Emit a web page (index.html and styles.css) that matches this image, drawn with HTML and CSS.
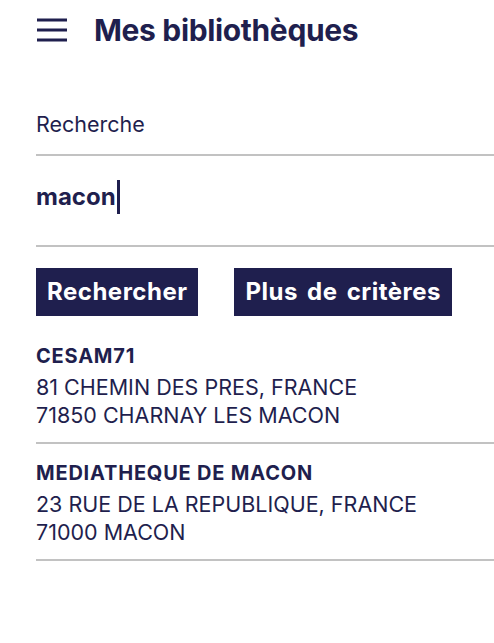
FILE: index.html
```html
<!DOCTYPE html>
<html lang="fr">
<head>
<meta charset="utf-8">
<link rel="stylesheet" href="styles.css">
</head>
<body>
<header class="topbar">
  <svg class="menu-icon" width="30" height="24" viewBox="0 0 30 24" aria-hidden="true">
    <rect x="0" y="0.5" width="30" height="3" fill="#1f1f4e"/>
    <rect x="0" y="10.5" width="30" height="3" fill="#1f1f4e"/>
    <rect x="0" y="20.5" width="30" height="3" fill="#1f1f4e"/>
  </svg>
  <h1 class="title">Mes bibliothèques</h1>
</header>
<main class="content">
  <div class="field">
    <div class="field-label">Recherche</div>
  </div>
  <div class="field">
    <div class="field-value">macon<span class="caret"></span></div>
  </div>
  <div class="actions">
    <button class="btn">Rechercher</button>
    <button class="btn">Plus de critères</button>
  </div>
  <ul class="results">
    <li class="result">
      <div class="result-name">CESAM71</div>
      <div class="result-line">81 CHEMIN DES PRES, FRANCE</div>
      <div class="result-line">71850 CHARNAY LES MACON</div>
    </li>
    <li class="result">
      <div class="result-name">MEDIATHEQUE DE MACON</div>
      <div class="result-line">23 RUE DE LA REPUBLIQUE, FRANCE</div>
      <div class="result-line">71000 MACON</div>
    </li>
  </ul>
</main>
</body>
</html>
```
FILE: styles.css
```css
* { box-sizing: border-box; }
html, body { margin: 0; padding: 0; background: #fff; }
body {
  font-family: Inter, Roboto, "Liberation Sans", sans-serif;
  color: #1f1f4e;
  width: 494px;
  height: 643px;
  overflow: hidden;
}
.topbar {
  display: flex;
  align-items: center;
  padding: 12px 0 0 37px;
}
.menu-icon { display: block; }
.title {
  margin: 0 0 0 27px;
  font-size: 30px;
  font-weight: 700;
  line-height: 36px;
  letter-spacing: -0.35px;
}
.content {
  padding-left: 36px;
  padding-top: 63px;
}
.field {
  border-bottom: 2px solid #c2c2c2;
}
.field-label {
  font-size: 21.5px;
  line-height: 26px;
  padding-bottom: 17px;
}
.field-value {
  font-size: 24px;
  font-weight: 700;
  line-height: 34px;
  padding-top: 24px;
  padding-bottom: 31px;
  display: flex;
}
.caret {
  display: block;
  width: 3px;
  height: 34px;
  background: #1f1f4e;
  margin-left: 1px;
}
.actions {
  display: flex;
  gap: 36px;
  margin-top: 21px;
}
.btn {
  font-family: Inter, Roboto, "Liberation Sans", sans-serif;
  background: #1f1f4e;
  color: #fff;
  border: 0;
  border-radius: 0;
  font-size: 24px;
  font-weight: 700;
  letter-spacing: 0.5px;
  word-spacing: 3px;
  height: 48px;
  padding: 0 11px;
  line-height: 48px;
}
.results {
  list-style: none;
  margin: 11px 0 0;
  padding: 0;
}
.result {
  border-bottom: 2px solid #c2c2c2;
  padding-top: 17px;
  padding-bottom: 13px;
}
.result-name {
  font-size: 20px;
  font-weight: 700;
  line-height: 24px;
  letter-spacing: 0.8px;
  margin-bottom: 5px;
}
.result-line {
  font-size: 21.5px;
  line-height: 28px;
}
```
